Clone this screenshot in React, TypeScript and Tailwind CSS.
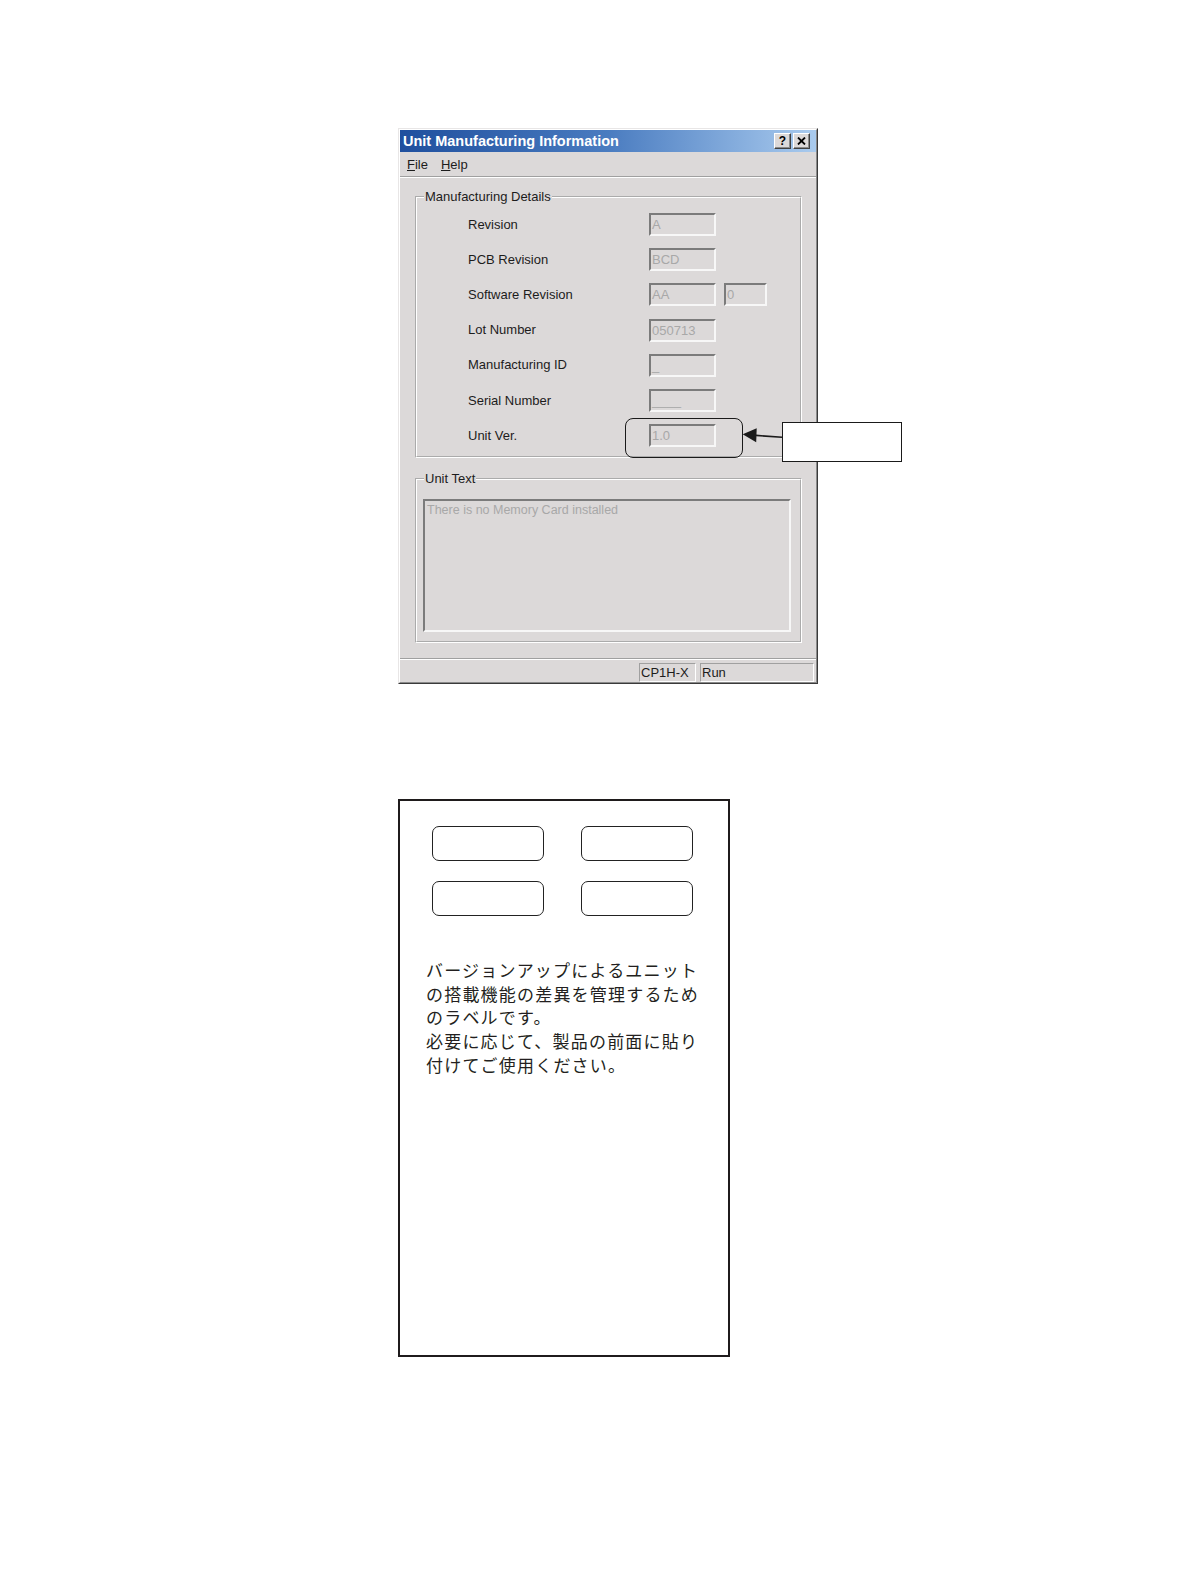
import type { ReactNode } from 'react';

const rows: { label: string; values: string[] }[] = [
    { label: 'Revision', values: ['A'] },
    { label: 'PCB Revision', values: ['BCD'] },
    { label: 'Software Revision', values: ['AA', '0'] },
    { label: 'Lot Number', values: ['050713'] },
    { label: 'Manufacturing ID', values: ['_'] },
    { label: 'Serial Number', values: ['____'] },
    { label: 'Unit Ver.', values: ['1.0'] },
];

function CaptionButton({ children }: { children: ReactNode }) {
    return (
        <div className="flex h-[16px] w-[17px] items-center justify-center border border-t-white border-l-white border-r-[#404040] border-b-[#404040] bg-[#dcd9d9] shadow-[inset_-1px_-1px_0_#8a8a8a]">
            {children}
        </div>
    );
}

function GroupBox({ title, children, className }: { title: string; children: ReactNode; className?: string }) {
    return (
        <fieldset className={`ml-[15px] w-[387px] border-2 border-white [border-style:groove] ${className ?? ''}`}>
            <legend className="ml-[7px] px-[1px] text-[13px] leading-[15px] text-[#1c1c1c]">{title}</legend>
            {children}
        </fieldset>
    );
}

function Window() {
    return (
        <div className="ml-[398px] w-[420px] border border-t-[#e8e6e6] border-l-[#e8e6e6] border-r-[#3a3a3a] border-b-[#3a3a3a] bg-[#dcd9d9]">
            <div className="border border-t-white border-l-white border-r-[#8a8a8a] border-b-[#8a8a8a]">
                {/* Title bar */}
                <div className="flex h-[22px] items-center justify-between bg-gradient-to-r from-[#1f4f9e] via-[#4a7cc0] to-[#aacbee] pl-[3px] pr-[6px]">
                    <span className="text-[14.5px] font-bold leading-none text-white">Unit Manufacturing Information</span>
                    <div className="flex gap-[2px]">
                        <CaptionButton>
                            <span className="text-[12px] font-bold leading-none text-black">?</span>
                        </CaptionButton>
                        <CaptionButton>
                            <svg width="9" height="8" viewBox="0 0 9 8">
                                <path d="M1 0.5 L8 7.5 M8 0.5 L1 7.5" stroke="#000" strokeWidth="1.8" />
                            </svg>
                        </CaptionButton>
                    </div>
                </div>

                {/* Menu */}
                <div className="flex h-[24px] items-center gap-[13px] pl-[7px] pt-[1px] text-[13px] text-[#1c1c1c]">
                    <span>
                        <span className="underline">F</span>ile
                    </span>
                    <span>
                        <span className="underline">H</span>elp
                    </span>
                </div>
                <div className="border-t border-b border-t-[#a0a0a0] border-b-white" />

                {/* Manufacturing Details */}
                <GroupBox title="Manufacturing Details" className="mt-[11px]">
                    <div className="pt-[3px] pb-[3px]">
                        {rows.map((row) => (
                            <div key={row.label} className="flex h-[35.17px] items-center pl-[51px]">
                                <span className="w-[181px] text-[13px] text-[#1c1c1c]">{row.label}</span>
                                <div className="flex gap-[8px]">
                                    {row.values.map((v, i) => (
                                        <div
                                            key={i}
                                            className={`h-[23px] ${i === 0 ? 'w-[67px]' : 'w-[43px]'} border-2 border-t-[#7b7b7b] border-l-[#7b7b7b] border-r-[#f7f7f7] border-b-[#f7f7f7] pl-[1px] text-[13px] leading-[19px] text-[#a8a8a8]`}
                                        >
                                            {v}
                                        </div>
                                    ))}
                                </div>
                            </div>
                        ))}
                    </div>
                </GroupBox>

                {/* Unit Text */}
                <GroupBox title="Unit Text" className="mt-[13px]">
                    <div className="pb-[9px]">
                        <div className="mt-[13px] ml-[6px] h-[133px] w-[368px] border-2 border-t-[#7b7b7b] border-l-[#7b7b7b] border-r-[#f7f7f7] border-b-[#f7f7f7] pl-[2px] pt-[2px] text-[12.5px] leading-[15px] text-[#a8a8a8]">
                            There is no Memory Card installed
                        </div>
                    </div>
                </GroupBox>

                {/* Status bar */}
                <div className="mt-[15px] border-t border-b border-t-[#a0a0a0] border-b-white" />
                <div className="mt-[3px] flex justify-end gap-[4px] pr-[2px] text-[13px] text-[#1c1c1c]">
                    <div className="h-[18.5px] w-[57px] border border-t-[#a0a0a0] border-l-[#a0a0a0] border-r-white border-b-white pl-[1px] leading-[17px]">
                        CP1H-X
                    </div>
                    <div className="h-[18.5px] w-[114px] border border-t-[#a0a0a0] border-l-[#a0a0a0] border-r-white border-b-white pl-[1px] leading-[17px]">
                        Run
                    </div>
                </div>
            </div>
        </div>
    );
}

function LabelSheet() {
    return (
        <div className="mt-[115px] ml-[398px] h-[558px] w-[332px] border-2 border-[#1f1b1c] bg-white">
            <div className="ml-[32px] mt-[25.7px] grid grid-cols-[112px_112px] gap-x-[36.7px] gap-y-[19.5px]">
                <div className="h-[35px] rounded-[7px] border-[1.8px] border-[#222]" />
                <div className="h-[35px] rounded-[7px] border-[1.8px] border-[#222]" />
                <div className="h-[35px] rounded-[7px] border-[1.8px] border-[#222]" />
                <div className="h-[35px] rounded-[7px] border-[1.8px] border-[#222]" />
            </div>
            <p className="ml-[26px] mt-[42px] font-['Noto_Sans_CJK_JP',sans-serif] text-[17px] leading-[23.8px] tracking-[1.2px] text-[#231f20]">
                バージョンアップによるユニット
                <br />
                の搭載機能の差異を管理するため
                <br />
                のラベルです。
                <br />
                必要に応じて、製品の前面に貼り
                <br />
                付けてご使用ください。
            </p>
        </div>
    );
}

export default function App() {
    return (
        <div className="relative min-h-[1582px] w-full bg-white pt-[128px] font-['Liberation_Sans',Arial,sans-serif]">
            <Window />
            <LabelSheet />

            {/* Callout annotation */}
            <div className="absolute left-[625px] top-[418px] h-[40px] w-[118px] rounded-[8px] border-[1.5px] border-[#1a1a1a]" />
            <svg className="absolute left-[740px] top-[425px]" width="44" height="20" viewBox="0 0 44 20">
                <path d="M16 10.4 L42 12.3" stroke="#1a1a1a" strokeWidth="1.6" />
                <path d="M2.7 9.3 L16.7 3.3 L16.2 17.3 Z" fill="#1a1a1a" />
            </svg>
            <div className="absolute left-[782px] top-[422px] h-[40px] w-[120px] border border-[#1a1a1a] bg-white" />
        </div>
    );
}
